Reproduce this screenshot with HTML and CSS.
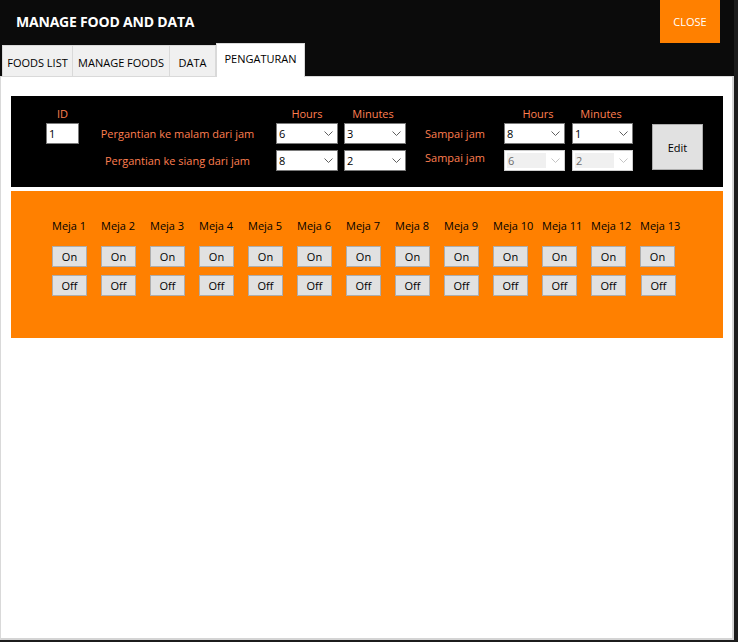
FILE: index.html
```html
<!DOCTYPE html>
<html>
<head>
<meta charset="utf-8">
<link rel="stylesheet" href="styles.css">
</head>
<body>
<div class="window">
  <div class="header">
    <div class="title">MANAGE FOOD AND DATA</div>
    <div class="close">CLOSE</div>
  </div>
  <div class="tabs">
    <div class="tab t1">FOODS LIST</div>
    <div class="tab t2">MANAGE FOODS</div>
    <div class="tab t3">DATA</div>
    <div class="tab active">PENGATURAN</div>
  </div>
  <div class="panel">
    <div class="settings">
      <div class="hd c1">ID</div>
      <div class="hd c3">Hours</div>
      <div class="hd c4">Minutes</div>
      <div class="hd c6">Hours</div>
      <div class="hd c7">Minutes</div>

      <div class="idbox c1 r2">1</div>
      <div class="lbl c2 r2">Pergantian ke malam dari jam</div>
      <div class="combo c3 r2"><span>6</span><svg width="9" height="6" viewBox="0 0 9 6"><path d="M0.5 0.5 L4.5 4.5 L8.5 0.5" fill="none" stroke="#606060" stroke-width="1"/></svg></div>
      <div class="combo c4 r2"><span>3</span><svg width="9" height="6" viewBox="0 0 9 6"><path d="M0.5 0.5 L4.5 4.5 L8.5 0.5" fill="none" stroke="#606060" stroke-width="1"/></svg></div>
      <div class="lbl c5 r2">Sampai jam</div>
      <div class="combo c6 r2"><span>8</span><svg width="9" height="6" viewBox="0 0 9 6"><path d="M0.5 0.5 L4.5 4.5 L8.5 0.5" fill="none" stroke="#606060" stroke-width="1"/></svg></div>
      <div class="combo c7 r2"><span>1</span><svg width="9" height="6" viewBox="0 0 9 6"><path d="M0.5 0.5 L4.5 4.5 L8.5 0.5" fill="none" stroke="#606060" stroke-width="1"/></svg></div>
      <div class="edit c8">Edit</div>

      <div class="lbl c2 r3">Pergantian ke siang dari jam</div>
      <div class="combo c3 r3"><span>8</span><svg width="9" height="6" viewBox="0 0 9 6"><path d="M0.5 0.5 L4.5 4.5 L8.5 0.5" fill="none" stroke="#606060" stroke-width="1"/></svg></div>
      <div class="combo c4 r3"><span>2</span><svg width="9" height="6" viewBox="0 0 9 6"><path d="M0.5 0.5 L4.5 4.5 L8.5 0.5" fill="none" stroke="#606060" stroke-width="1"/></svg></div>
      <div class="lbl c5 r3 up">Sampai jam</div>
      <div class="combo disabled c6 r3"><span>6</span><svg width="9" height="6" viewBox="0 0 9 6"><path d="M0.5 0.5 L4.5 4.5 L8.5 0.5" fill="none" stroke="#c4c4c4" stroke-width="1"/></svg></div>
      <div class="combo disabled c7 r3"><span>2</span><svg width="9" height="6" viewBox="0 0 9 6"><path d="M0.5 0.5 L4.5 4.5 L8.5 0.5" fill="none" stroke="#c4c4c4" stroke-width="1"/></svg></div>
    </div>
    <div class="tables">
      <div class="meja"><div class="mlbl">Meja 1</div><div class="btn">On</div><div class="btn">Off</div></div>
      <div class="meja"><div class="mlbl">Meja 2</div><div class="btn">On</div><div class="btn">Off</div></div>
      <div class="meja"><div class="mlbl">Meja 3</div><div class="btn">On</div><div class="btn">Off</div></div>
      <div class="meja"><div class="mlbl">Meja 4</div><div class="btn">On</div><div class="btn">Off</div></div>
      <div class="meja"><div class="mlbl">Meja 5</div><div class="btn">On</div><div class="btn">Off</div></div>
      <div class="meja"><div class="mlbl">Meja 6</div><div class="btn">On</div><div class="btn">Off</div></div>
      <div class="meja"><div class="mlbl">Meja 7</div><div class="btn">On</div><div class="btn">Off</div></div>
      <div class="meja"><div class="mlbl">Meja 8</div><div class="btn">On</div><div class="btn">Off</div></div>
      <div class="meja"><div class="mlbl">Meja 9</div><div class="btn">On</div><div class="btn">Off</div></div>
      <div class="meja"><div class="mlbl">Meja 10</div><div class="btn">On</div><div class="btn">Off</div></div>
      <div class="meja"><div class="mlbl">Meja 11</div><div class="btn">On</div><div class="btn">Off</div></div>
      <div class="meja"><div class="mlbl">Meja 12</div><div class="btn">On</div><div class="btn">Off</div></div>
      <div class="meja"><div class="mlbl">Meja 13</div><div class="btn">On</div><div class="btn shift">Off</div></div>
    </div>
  </div>
</div>
</body>
</html>
```
FILE: styles.css
```css
* { box-sizing: border-box; }
html, body {
  margin: 0;
  padding: 0;
  background: #0b0b0b;
  font-family: "Open Sans", "Noto Sans", sans-serif;
  font-size: 11px;
}
.window {
  width: 738px;
  height: 642px;
  background: #0b0b0b;
  border-right: 4px solid #1c1c1c;
  border-bottom: 2px solid #1c1c1c;
  display: flex;
  flex-direction: column;
}
.header {
  height: 43px;
  display: flex;
  justify-content: space-between;
  align-items: flex-start;
}
.title {
  color: #ffffff;
  font-weight: 700;
  font-size: 14px;
  padding: 12px 0 0 16px;
  letter-spacing: -0.2px;
}
.close {
  width: 60px;
  height: 43px;
  margin-right: 14px;
  background: #ff8000;
  color: #ffffff;
  font-size: 11px;
  display: flex;
  align-items: center;
  justify-content: center;
}
.tabs {
  height: 33px;
  display: flex;
  align-items: flex-end;
  padding-left: 2px;
}
.tab {
  height: 31px;
  background: #f0f0f0;
  border: 1px solid #d9d9d9;
  border-bottom: none;
  border-right: none;
  color: #000;
  font-size: 11px;
  display: flex;
  align-items: center;
  padding-top: 2px;
  justify-content: center;
}
.t1 { width: 70px; }
.t2 { width: 97px; }
.t3 { width: 47px; border-right: 1px solid #d9d9d9; }
.tab.active {
  width: 89px;
  height: 34px;
  margin-bottom: -1px;
  background: #ffffff;
  border-right: 1px solid #d9d9d9;
  align-items: flex-start;
  padding-top: 7px;
  position: relative;
  z-index: 1;
}
.panel {
  flex: 1;
  background: #ffffff;
  border: 1px solid #d9d9d9;
  border-right: 2px solid #d4d4d4;
  border-bottom: 2px solid #d4d4d4;
  padding: 19px 9px 0 10px;
}
.settings {
  background: #000000;
  height: 91px;
  display: grid;
  grid-template-columns: 33px 197px 68px 62px 98px 68px 62px 1fr;
  grid-template-rows: 11px 21px 21px;
  row-gap: 6px;
  padding: 10px 0 0 35px;
  align-items: center;
}
.hd {
  grid-row: 1;
  color: #ff7f50;
  font-size: 11px;
  text-align: center;
  align-self: start;
  line-height: 15px;
}
.c1 { grid-column: 1; }
.c2 { grid-column: 2; }
.c3 { grid-column: 3; }
.c4 { grid-column: 4; }
.c5 { grid-column: 5; }
.c6 { grid-column: 6; }
.c7 { grid-column: 7; }
.c8 { grid-column: 8; }
.r2 { grid-row: 2; }
.r3 { grid-row: 3; }
.hd.c3, .hd.c6 { width: 62px; }
.hd.c6 { width: 62px; margin-left: 3px; }
.hd.c4, .hd.c7 { width: 62px; margin-left: -2px; }
.idbox {
  width: 33px;
  height: 21px;
  background: #ffffff;
  border: 1px solid #7a7a7a;
  color: #000;
  font-size: 11px;
  padding-left: 2px;
  line-height: 19px;
}
.lbl {
  color: #ff7f50;
  font-size: 11px;
  text-align: center;
  white-space: nowrap;
}
.lbl.up { margin-top: -6px; }
.combo {
  width: 62px;
  height: 21px;
  background: #ffffff;
  border: 1px solid #7a7a7a;
  display: flex;
  align-items: center;
  justify-content: space-between;
  padding: 0 4px 0 2px;
  color: #000;
  font-size: 11px;
}
.combo.c6, .combo.c7 { width: 61px; }
.combo.disabled {
  border-color: #cccccc;
  color: #6d6d6d;
  padding: 2px 4px 2px 2px;
  align-items: stretch;
}
.combo.disabled span {
  background: #f0f0f0;
  width: 39px;
  padding-left: 1px;
  line-height: 15px;
}
.combo.disabled svg { align-self: center; }
.edit {
  grid-row: 2 / span 2;
  width: 51px;
  height: 46px;
  margin-left: 18px;
  background: #e1e1e1;
  border: 1px solid #adadad;
  color: #000;
  font-size: 11px;
  display: flex;
  align-items: center;
  justify-content: center;
}
.tables {
  margin-top: 4px;
  height: 147px;
  background: #ff8000;
  display: flex;
  padding: 27px 0 0 41px;
}
.meja {
  width: 49px;
  display: flex;
  flex-direction: column;
  align-items: flex-start;
}
.mlbl {
  color: #000;
  font-size: 11px;
  line-height: 15px;
  height: 15px;
  white-space: nowrap;
  margin-bottom: 13px;
}
.btn {
  width: 35px;
  height: 21px;
  background: #e1e1e1;
  border: 1px solid #adadad;
  color: #000;
  font-size: 11px;
  display: flex;
  align-items: center;
  justify-content: center;
  margin-bottom: 8px;
}
.btn.shift { margin-left: 1px; }
```
